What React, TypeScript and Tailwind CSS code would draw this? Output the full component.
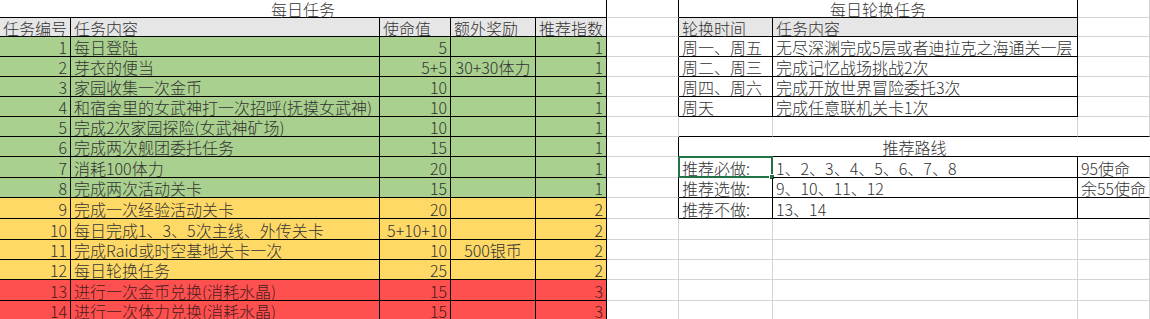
import type { ReactNode } from "react";

type Line = "black" | "grid" | "none";

interface CellProps {
    span?: number;
    bg?: string;
    r?: Line;
    b?: Line;
    align?: "left" | "right" | "center";
    tone?: string;
    children?: ReactNode;
    selected?: boolean;
}

const rLine = { black: "border-r border-r-black", grid: "border-r border-r-[#d4d4d4]", none: "" };
const bLine = { black: "border-b border-b-black", grid: "border-b border-b-[#d4d4d4]", none: "" };
const alignCls = { left: "justify-start pl-[3px]", right: "justify-end pr-[3px]", center: "justify-center" };
const spanCls: Record<number, string> = { 1: "", 2: "col-span-2", 3: "col-span-3", 5: "col-span-5" };

function Cell({ span = 1, bg = "", r = "grid", b = "grid", align = "left", tone = "text-[#333]", children, selected }: CellProps) {
    return (
        <div
            className={`relative flex items-center whitespace-nowrap leading-4 pt-px ${spanCls[span]} ${bg} ${rLine[r]} ${bLine[b]} ${alignCls[align]} ${tone}`}
        >
            {children}
            {selected && (
                <>
                    <div className="absolute -left-px -top-px -right-px -bottom-px border-2 border-[#217346]" />
                    <div className="absolute -right-[3px] -bottom-[3px] w-[6px] h-[6px] bg-[#217346] border border-white" />
                </>
            )}
        </div>
    );
}

type Level = "green" | "yellow" | "red";

const tasks: { id: number; text: string; value: string; bonus: string; level: Level }[] = [
    { id: 1, text: "每日登陆", value: "5", bonus: "", level: "green" },
    { id: 2, text: "芽衣的便当", value: "5+5", bonus: "30+30体力", level: "green" },
    { id: 3, text: "家园收集一次金币", value: "10", bonus: "", level: "green" },
    { id: 4, text: "和宿舍里的女武神打一次招呼(抚摸女武神)", value: "10", bonus: "", level: "green" },
    { id: 5, text: "完成2次家园探险(女武神矿场)", value: "10", bonus: "", level: "green" },
    { id: 6, text: "完成两次舰团委托任务", value: "15", bonus: "", level: "green" },
    { id: 7, text: "消耗100体力", value: "20", bonus: "", level: "green" },
    { id: 8, text: "完成两次活动关卡", value: "15", bonus: "", level: "green" },
    { id: 9, text: "完成一次经验活动关卡", value: "20", bonus: "", level: "yellow" },
    { id: 10, text: "每日完成1、3、5次主线、外传关卡", value: "5+10+10", bonus: "", level: "yellow" },
    { id: 11, text: "完成Raid或时空基地关卡一次", value: "10", bonus: "500银币", level: "yellow" },
    { id: 12, text: "每日轮换任务", value: "25", bonus: "", level: "yellow" },
    { id: 13, text: "进行一次金币兑换(消耗水晶)", value: "15", bonus: "", level: "red" },
    { id: 14, text: "进行一次体力兑换(消耗水晶)", value: "15", bonus: "", level: "red" },
];

const fill: Record<Level, string> = {
    green: "bg-[#a9d08e]",
    yellow: "bg-[#ffd966]",
    red: "bg-[#ff5050]",
};
const score: Record<Level, string> = { green: "1", yellow: "2", red: "3" };
const ink: Record<Level, string> = { green: "text-[#333]", yellow: "text-[#333]", red: "text-[#4a1c1c]" };

const rotation = [
    ["周一、周五", "无尽深渊完成5层或者迪拉克之海通关一层"],
    ["周二、周三", "完成记忆战场挑战2次"],
    ["周四、周六", "完成开放世界冒险委托3次"],
    ["周天", "完成任意联机关卡1次"],
];

const routes = [
    ["推荐必做:", "1、2、3、4、5、6、7、8", "95使命"],
    ["推荐选做:", "9、10、11、12", "余55使命"],
    ["推荐不做:", "13、14", ""],
];

// right-hand part of each sheet row (columns F..I)
function RightSide({ row }: { row: number }) {
    if (row === 0) {
        return (
            <>
                <Cell r="black" />
                <Cell span={2} r="black" b="black" align="center">每日轮换任务</Cell>
                <Cell />
            </>
        );
    }
    if (row === 1) {
        return (
            <>
                <Cell r="black" />
                <Cell bg="bg-[#e7e6e6]" r="black" b="black">轮换时间</Cell>
                <Cell bg="bg-[#e7e6e6]" r="black" b="black">任务内容</Cell>
                <Cell />
            </>
        );
    }
    if (row >= 2 && row <= 5) {
        const [when, what] = rotation[row - 2];
        return (
            <>
                <Cell r="black" />
                <Cell r="black" b="black">{when}</Cell>
                <Cell r="black" b="black">{what}</Cell>
                <Cell />
            </>
        );
    }
    if (row === 6) {
        return (
            <>
                <Cell />
                <Cell b="black" />
                <Cell b="black" />
                <Cell b="black" />
            </>
        );
    }
    if (row === 7) {
        return (
            <>
                <Cell r="black" />
                <Cell span={3} r="none" b="black" align="center">推荐路线</Cell>
            </>
        );
    }
    if (row >= 8 && row <= 10) {
        const [label, ids, note] = routes[row - 8];
        return (
            <>
                <Cell r="black" />
                <Cell r="black" b="black" selected={row === 8}>{label}</Cell>
                <Cell r="black" b="black">{ids}</Cell>
                <Cell b="black">{note}</Cell>
            </>
        );
    }
    return (
        <>
            <Cell />
            <Cell />
            <Cell />
            <Cell />
        </>
    );
}

export default function App() {
    return (
        <div
            className="w-[1150px] h-[319px] overflow-hidden bg-white text-[16px] font-light"
            style={{ fontFamily: '"Noto Sans CJK SC", "Noto Sans", sans-serif' }}
        >
            <div className="grid grid-cols-[71px_309px_71px_85px_71px_72px_94px_305px_72px] grid-rows-[18px_19px_20px_20px_20px_20px_20px_20px_21px_20px_21px_21px_20px_20px_21px_20px]">
                {/* row 0: titles */}
                <Cell span={5} r="black" b="black" align="center">每日任务</Cell>
                <RightSide row={0} />

                {/* row 1: headers */}
                <Cell bg="bg-[#e7e6e6]" r="black" b="black">任务编号</Cell>
                <Cell bg="bg-[#e7e6e6]" r="black" b="black">任务内容</Cell>
                <Cell bg="bg-[#e7e6e6]" r="black" b="black">使命值</Cell>
                <Cell bg="bg-[#e7e6e6]" r="black" b="black">额外奖励</Cell>
                <Cell bg="bg-[#e7e6e6]" r="black" b="black">推荐指数</Cell>
                <RightSide row={1} />

                {tasks.map((t, i) => (
                    <div key={t.id} className="contents">
                        <Cell bg={fill[t.level]} tone={ink[t.level]} r="black" b="black" align="right">{t.id}</Cell>
                        <Cell bg={fill[t.level]} tone={ink[t.level]} r="black" b="black">{t.text}</Cell>
                        <Cell bg={fill[t.level]} tone={ink[t.level]} r="black" b="black" align="right">{t.value}</Cell>
                        <Cell bg={fill[t.level]} tone={ink[t.level]} r="black" b="black" align="center">{t.bonus}</Cell>
                        <Cell bg={fill[t.level]} tone={ink[t.level]} r="black" b="black" align="right">{score[t.level]}</Cell>
                        <RightSide row={i + 2} />
                    </div>
                ))}
            </div>
        </div>
    );
}
